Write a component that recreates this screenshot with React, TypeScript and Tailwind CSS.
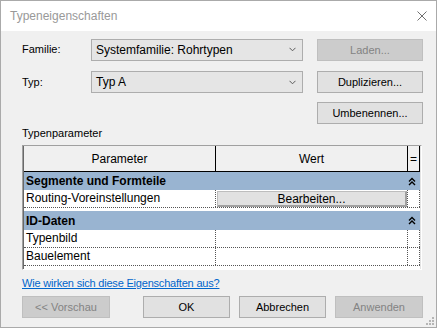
import React from 'react';

const font = "font-['Liberation_Sans',Arial,sans-serif]";

function Chevron() {
    return (
        <svg width="7" height="5" viewBox="0 0 7 5" className="shrink-0">
            <path d="M0.5 0.8 L3.5 3.8 L6.5 0.8" fill="none" stroke="#5a5a5a" strokeWidth="1" />
        </svg>
    );
}

function DoubleUp() {
    return (
        <svg width="8" height="9" viewBox="0 0 8 9">
            <path d="M1 4.5 L4 1.5 L7 4.5 M1 8 L4 5 L7 8" fill="none" stroke="#000" strokeWidth="1.4" />
        </svg>
    );
}

function Btn({ label, w, disabled }: { label: string; w: string; disabled?: boolean }) {
    return (
        <div
            className={`${w} h-[22px] flex items-center justify-center text-[11px] border ${
                disabled ? 'bg-[#cccccc] border-[#bfbfbf] text-[#838383]' : 'bg-[#e1e1e1] border-[#adadad] text-black'
            }`}
        >
            {label}
        </div>
    );
}

function Combo({ value }: { value: string }) {
    return (
        <div className="w-[212px] h-[22px] bg-[#e5e5e5] border border-[#adadad] flex items-center justify-between pl-[4px] pr-[6px] text-[12px]">
            <span>{value}</span>
            <Chevron />
        </div>
    );
}

function Category({ title, h }: { title: string; h: string }) {
    return (
        <div className={`${h} bg-[#99b4d1] flex items-center pl-[2px] pr-[4px] justify-between`}>
            <span className="font-bold text-[12px]">{title}</span>
            <DoubleUp />
        </div>
    );
}

function DataRow({ name, children }: { name: string; children?: React.ReactNode }) {
    return (
        <div className="h-[18px] flex border-b border-dotted border-[#555]">
            <div className="w-[192px] border-r border-dotted border-[#555] pl-[2px] text-[12px] leading-[17px]">{name}</div>
            <div className="w-[192px] border-r border-dotted border-[#555] pl-[1px] pt-[1px]">{children}</div>
            <div className="w-[12px] border-r border-dotted border-[#555]"></div>
        </div>
    );
}

export default function App() {
    return (
        <div className={`${font} relative w-[437px] h-[328px] border border-[#aaaaaa] bg-[#f0f0f0] flex flex-col text-black`}>
            {/* Title bar */}
            <div className="h-[30px] bg-white flex items-center justify-between pl-[9px] pr-[9px] shrink-0">
                <span className="text-[12px] text-[#999999]">Typeneigenschaften</span>
                <svg width="10" height="10" viewBox="0 0 10 10">
                    <path d="M0.5 0.5 L9.5 9.5 M9.5 0.5 L0.5 9.5" stroke="#6f6f6f" strokeWidth="1" />
                </svg>
            </div>

            <div className="flex flex-col pt-[7px] pl-[21px] pr-[13px]">
                <div className="flex items-center">
                    <div className="w-[69px] text-[11px]">Familie:</div>
                    <Combo value="Systemfamilie: Rohrtypen" />
                    <div className="ml-[14px] mt-[1px]">
                        <Btn label="Laden..." w="w-[106px]" disabled />
                    </div>
                </div>
                <div className="flex items-center mt-[10px]">
                    <div className="w-[69px] text-[11px]">Typ:</div>
                    <Combo value="Typ A" />
                    <div className="ml-[14px]">
                        <Btn label="Duplizieren..." w="w-[106px]" />
                    </div>
                </div>
                <div className="flex justify-end mt-[9px]">
                    <Btn label="Umbenennen..." w="w-[106px]" />
                </div>

                <div className="h-[16px] mt-[1px] text-[11px] leading-[16px]">Typenparameter</div>

                {/* Property grid */}
                <div className="mt-[4px] w-[400px] h-[125px] border border-t-[#a0a0a0] border-l-[#a0a0a0] border-r-white border-b-white">
                    <div className="h-full bg-white border-l border-[#696969] border-r border-r-[#e3e3e3] flex flex-col">
                        <div className="h-[26px] flex bg-[#f0f0f0] border-b border-black text-[12px]">
                            <div className="w-[192px] border-r border-black flex items-center justify-center">Parameter</div>
                            <div className="w-[192px] border-r border-black flex items-center justify-center">Wert</div>
                            <div className="w-[12px] border-r border-black flex items-center justify-center">=</div>
                        </div>
                        <Category title="Segmente und Formteile" h="h-[18px]" />
                        <DataRow name="Routing-Voreinstellungen">
                            <div className="w-[190px] h-[16px] bg-[#e1e1e1] border border-[#bdbdbd] border-r-2 border-b-2 border-r-[#a0a0a0] border-b-[#a0a0a0] flex items-center justify-center text-[12px]">
                                Bearbeiten...
                            </div>
                        </DataRow>
                        <div className="h-[3px]"></div>
                        <Category title="ID-Daten" h="h-[19px]" />
                        <DataRow name="Typenbild" />
                        <DataRow name="Bauelement" />
                    </div>
                </div>

                <div className="mt-[5px] h-[16px] leading-[16px] text-[11px] tracking-[-0.2px]">
                    <span className="text-[#0066cc] underline">Wie wirken sich diese Eigenschaften aus?</span>
                </div>

                <div className="flex mt-[5px]">
                    <Btn label="<< Vorschau" w="w-[88px]" disabled />
                    <div className="ml-[33px] flex gap-[9px]">
                        <Btn label="OK" w="w-[87px]" />
                        <Btn label="Abbrechen" w="w-[87px]" />
                        <Btn label="Anwenden" w="w-[88px]" disabled />
                    </div>
                </div>
            </div>

            {/* Resize grip */}
            <svg width="10" height="10" viewBox="0 0 10 10" className="absolute right-[1px] bottom-[1px]">
                <rect x="7" y="1" width="2" height="2" fill="#b5b5b5" />
                <rect x="4" y="4" width="2" height="2" fill="#b5b5b5" />
                <rect x="7" y="4" width="2" height="2" fill="#b5b5b5" />
                <rect x="1" y="7" width="2" height="2" fill="#b5b5b5" />
                <rect x="4" y="7" width="2" height="2" fill="#b5b5b5" />
                <rect x="7" y="7" width="2" height="2" fill="#b5b5b5" />
            </svg>
        </div>
    );
}
